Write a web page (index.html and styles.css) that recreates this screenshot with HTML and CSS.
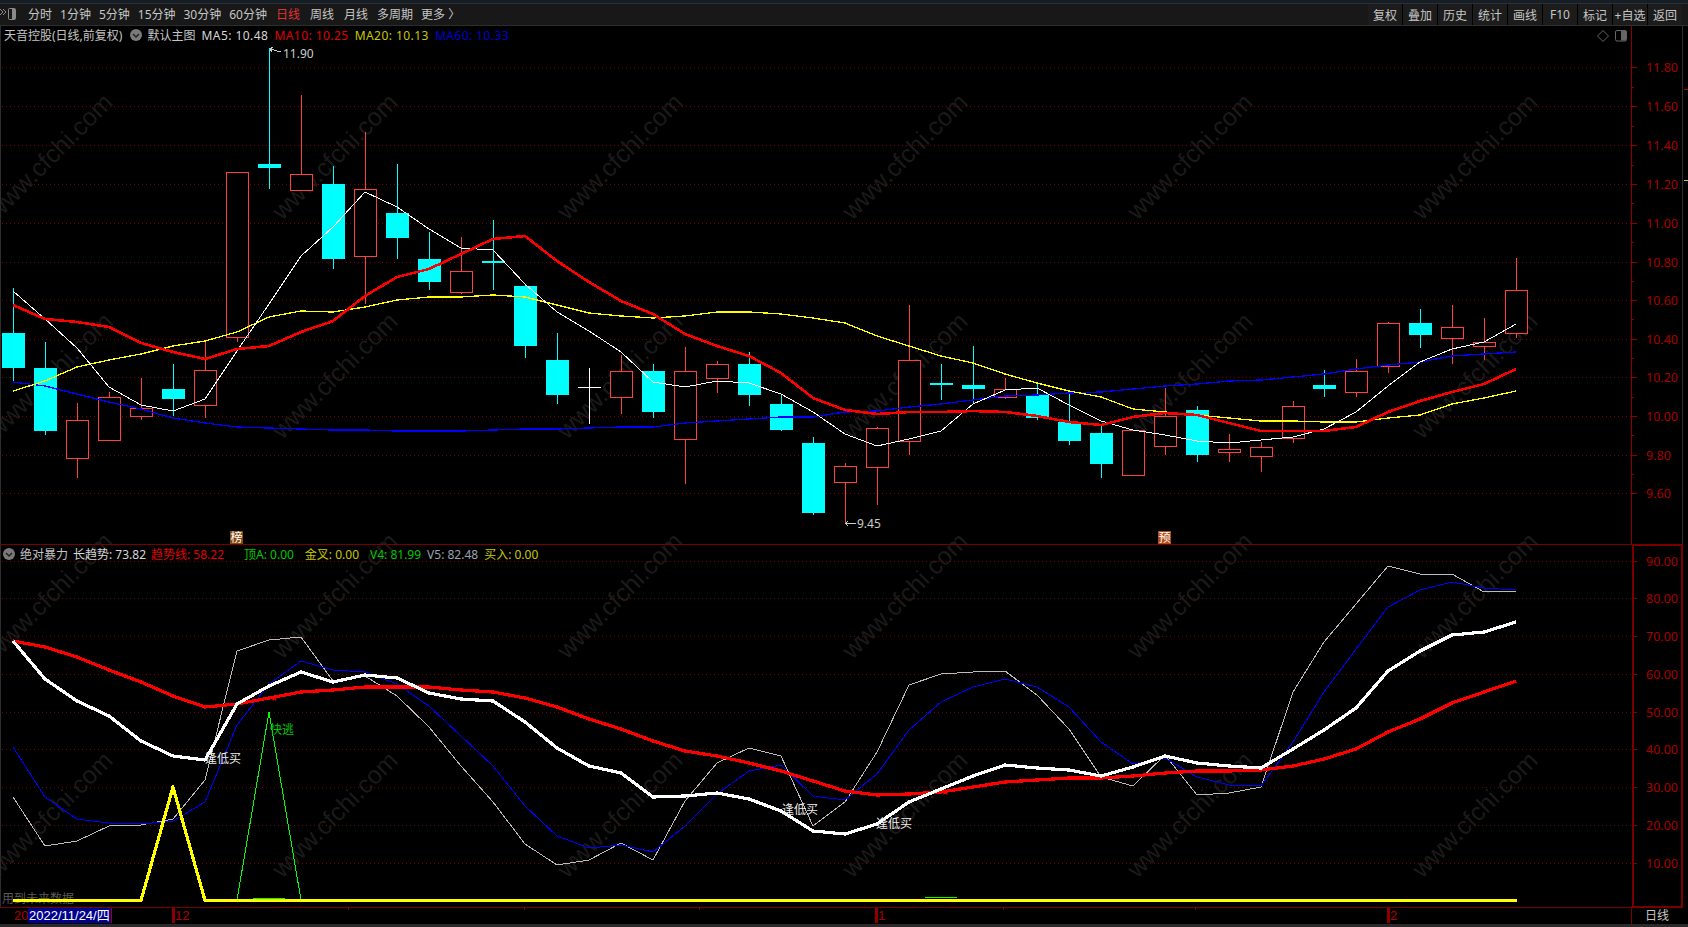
FILE: index.html
```html
<!DOCTYPE html>
<html lang="zh-CN">
<head>
<meta charset="utf-8">
<title>天音控股</title>
<link rel="stylesheet" href="styles.css">
</head>
<body>
<div class="app">
  <div class="watermarks" id="watermarks"></div>
  <div class="topstrip"></div>
  <header class="toolbar">
    <svg class="sidebar-toggle" width="17" height="16" viewBox="0 0 17 16"><path class="ico" d="M0 3l3 3-3 3M3 3l3 3-3 3"/><rect class="ico" x="8.500" y="2.500" width="7" height="11" rx="1"/><rect class="ico-fill" x="12" y="3" width="3" height="10"/></svg>
    <nav class="tabs">
      <span class="tab first">分时</span>
      <span class="tab">1分钟</span>
      <span class="tab">5分钟</span>
      <span class="tab">15分钟</span>
      <span class="tab">30分钟</span>
      <span class="tab">60分钟</span>
      <span class="tab wide active">日线</span>
      <span class="tab wide">周线</span>
      <span class="tab wide">月线</span>
      <span class="tab">多周期</span>
      <span class="tab">更多 〉</span>
    </nav>
    <div class="buttons">
      <span class="btn">复权</span>
      <span class="btn">叠加</span>
      <span class="btn">历史</span>
      <span class="btn">统计</span>
      <span class="btn">画线</span>
      <span class="btn">F10</span>
      <span class="btn">标记</span>
      <span class="btn">+自选</span>
      <span class="btn">返回</span>
    </div>
  </header>

  <section class="panel panel-main">
    <svg class="chart" width="1688" height="518" viewBox="0 27 1688 518">
      <g id="main-grid"></g>
      <g id="candles"></g>
      <g id="main-lines"></g>
      <text class="tag" x="283" y="59">11.90</text>
      <path class="pointer" d="M270 50L281 53M270 50l3-2M270 50l2 3"/>
      <text class="tag" x="857" y="529">9.45</text>
      <path class="pointer" d="M845 524.500H856M845 524.500l3-2M845 524.500l3 2"/>
      <rect class="badge-a" x="230" y="532" width="13" height="13"/>
      <text class="badge-text" x="230.500" y="543">榜</text>
      <rect class="badge-b" x="1158" y="532" width="13" height="13"/>
      <text class="badge-text" x="1158.500" y="543">预</text>
      <rect class="marker-red" x="1684" y="90" width="4" height="1"/>
      <rect class="marker-yellow" x="1684" y="181" width="4" height="1"/>
    </svg>
    <div class="legend">
      <span class="plain">天音控股(日线,前复权)</span>
      <svg class="chev chev-main" width="12" height="12" viewBox="0 0 12 12"><circle class="chev-disc" cx="6" cy="6" r="6"/><path class="chev-mark" d="M3 5l3 3 3-3"/></svg>
      <span class="plain">默认主图</span>
      <span class="c-white stretch">MA5: 10.48</span>
      <span class="c-red stretch">MA10: 10.25</span>
      <span class="c-yellow stretch">MA20: 10.13</span>
      <span class="c-blue stretch">MA60: 10.33</span>
    </div>
    <svg class="panel-tools" width="32" height="14" viewBox="0 0 32 14"><path class="tool" d="M7 1.500L12.500 7 7 12.500 1.500 7z"/><rect class="tool" x="19.500" y="1.500" width="11" height="10.500" rx="1.500"/><rect class="tool-fill" x="25" y="2" width="5" height="9.500"/></svg>
  </section>

  <section class="panel panel-sub">
    <svg class="chart" width="1688" height="362" viewBox="0 546 1688 362">
      <g id="sub-grid"></g>
      <text class="future" x="2" y="904">用到未来数据</text>
      <g id="sub-lines"></g>
      <text class="sig sig-white" x="205" y="764">逢低买</text>
      <text class="sig sig-green" x="270" y="735">快逃</text>
      <text class="sig sig-white" x="782" y="815">逢低买</text>
      <text class="sig sig-white" x="876" y="829">逢低买</text>
      <text class="star" x="270" y="702">★</text>
      <text class="star" x="941" y="796">★</text>
    </svg>
    <div class="legend legend-sub">
      <svg class="chev" width="12" height="12" viewBox="0 0 12 12"><circle class="chev-disc" cx="6" cy="6" r="6"/><path class="chev-mark" d="M3 5l3 3 3-3"/></svg>
      <span class="plain">绝对暴力</span>
      <span class="c-white">长趋势: 73.82</span>
      <span class="c-red">趋势线: 58.22</span>
      <span class="c-green gap-lg">顶A: 0.00</span>
      <span class="c-yellow gap-md">金叉: 0.00</span>
      <span class="c-green gap-md">V4: 81.99</span>
      <span class="c-grey gap-sm">V5: 82.48</span>
      <span class="c-yellow gap-sm">买入: 0.00</span>
    </div>
  </section>

  <footer class="timebar">
    <span class="time-label t-20">20</span>
    <span class="time-cursor">2022/11/24/四</span>
    <span class="time-tick major t-12">12</span>
    <span class="time-tick t-348"></span>
    <span class="time-tick t-524"></span>
    <span class="time-tick t-699"></span>
    <span class="time-tick major t-876">1</span>
    <span class="time-tick t-1003"></span>
    <span class="time-tick t-1195"></span>
    <span class="time-tick major t-1387">2</span>
    <span class="time-unit">日线</span>
  </footer>
  <div class="statusline"></div>
</div>
<script src="chart.js"></script>
</body>
</html>
```

FILE: styles.css
```css
* { box-sizing: border-box; }
html, body { margin: 0; padding: 0; background: #000; }
body { font-family: "Noto Sans", "Noto Sans CJK SC", sans-serif; font-size: 12px; color: #ccc; }

.app { position: relative; width: 1688px; height: 927px; overflow: hidden; display: flex; flex-direction: column; background: #000; }

.watermarks { position: absolute; left: -93px; top: 47px; display: grid; grid-template-columns: repeat(6, 285px); grid-auto-rows: 219.300px; z-index: 0; }
.wm { display: flex; align-items: center; justify-content: center; font-family: "Liberation Sans", sans-serif; font-size: 25px; color: #1a1a1a; white-space: nowrap; }
.wm span { display: block; transform: rotate(-45deg); }

.topstrip { height: 4px; background: #171d24; border-bottom: 1px solid #2b3138; }
.toolbar { position: relative; z-index: 1; height: 22px; display: flex; align-items: stretch; background: #181818; border-bottom: 1px solid #2e2e2e; padding-bottom: 0; }
.sidebar-toggle { margin-top: 2px; flex: none; }
.ico { fill: none; stroke: #8a8a8a; stroke-width: 1; }
.ico-fill { fill: #8a8a8a; }
.tabs { display: flex; align-items: center; margin-left: 7px; }
.tab { padding: 0 4px; line-height: 21px; white-space: nowrap; color: #c6c6c6; }
.tab.wide { padding: 0 5px; }
.tab.active { color: #e53030; }
.buttons { margin-left: auto; margin-right: 6px; display: flex; gap: 1px; background: #000; }
.btn { width: 34px; display: flex; align-items: center; justify-content: center; background: #1c1c1c; color: #c6c6c6; white-space: nowrap; }

.panel { position: relative; z-index: 1; width: 1683px; border-bottom: 1px solid #7a0000; flex: none; }
.panel-main { height: 519px; }
.panel-sub { height: 363px; }
.chart { display: block; overflow: visible; shape-rendering: crispEdges; }

.legend { position: absolute; left: 4px; top: 0; height: 18px; display: flex; align-items: center; gap: 5px; white-space: nowrap; }
.legend-sub { left: 3px; top: 0; }
.gap-lg { margin-left: 15px; }
.gap-md { margin-left: 6px; }
.gap-sm { margin-left: 1px; }
.chev { flex: none; }
.chev-main { margin-left: 3px; }
.chev-disc { fill: #7a7a7a; }
.chev-mark { fill: none; stroke: #222; stroke-width: 1.500; }
.plain { color: #c4c4c4; }
.stretch { letter-spacing: 0.450px; margin-left: 1px; }
.c-white { color: #d6d6d6; }
.c-red { color: #e00000; }
.c-yellow { color: #c8c800; }
.c-blue { color: #0000d0; }
.c-green { color: #00c800; }
.c-grey { color: #9aa2b0; }

.panel-tools { position: absolute; left: 1596px; top: 3px; }
.tool { fill: none; stroke: #666; stroke-width: 1; }
.tool-fill { fill: #666; }

.grid { stroke: #7c0000; stroke-width: 1; stroke-dasharray: 1 3; fill: none; }
.axis { stroke: #8e0000; stroke-width: 1; fill: none; }
.axis-box { stroke: #7a0000; stroke-width: 2; fill: none; }
.edge { stroke: #2e2e2e; stroke-width: 1; }
.axis-label { fill: #a80000; font-size: 12.500px; font-family: "Noto Sans", sans-serif; text-rendering: geometricPrecision; }

.up { fill: #000; stroke: #ff4040; stroke-width: 1; }
.up-wick { fill: #ff4040; }
.down { fill: #00ffff; }
.doji-white { fill: #fff; }

.line { fill: none; stroke-linejoin: round; }
.ma5 { stroke: #fff; stroke-width: 1; }
.ma10 { stroke: #f00; stroke-width: 2.600; }
.ma20 { stroke: #ff0; stroke-width: 1.300; }
.ma60 { stroke: #00f; stroke-width: 1.300; }
.long { stroke: #fff; stroke-width: 3.200; }
.trend { stroke: #f00; stroke-width: 3.200; }
.v4 { stroke: #00f; stroke-width: 1; }
.v5 { stroke: #bbb; stroke-width: 1; }
.buy { stroke: #ff0; stroke-width: 3.200; }
.escape { stroke: #0f0; stroke-width: 1; }

.tag { fill: #ccc; font-size: 12px; }
.pointer { fill: none; stroke: #ccc; stroke-width: 1; }
.badge-a { fill: #86480f; }
.badge-b { fill: #b04a16; }
.badge-text { fill: #fff; font-size: 12px; font-family: "Noto Sans CJK SC", sans-serif; }
.marker-red { fill: #c00000; }
.marker-yellow { fill: #c8c060; }

.future { fill: #5a5a5a; font-size: 12px; font-family: "Noto Sans CJK SC", sans-serif; }
.sig { font-size: 12px; font-family: "Noto Sans CJK SC", sans-serif; }
.sig-white { fill: #eee; }
.sig-green { fill: #00c800; }
.star { fill: #f00; font-size: 9px; font-family: "DejaVu Sans", sans-serif; }

.timebar { position: relative; z-index: 1; height: 16px; flex: none; display: block; }
.time-cursor { position: absolute; left: 28px; top: 0; width: 84px; height: 15px; background: #00008c; color: #fff; border-right: 1px solid #a00000; font-size: 13px; line-height: 15px; font-family: "Liberation Sans", "Noto Sans CJK SC", sans-serif; white-space: nowrap; overflow: hidden; padding-left: 1px; }
.time-label { position: absolute; left: 14px; top: 0; line-height: 15px; color: #b00000; font-size: 13px; font-family: "Liberation Sans", sans-serif; }
.time-tick { position: absolute; top: 0; width: 1px; height: 2px; background: #8e0000; }
.time-tick.major { height: 15px; color: #b00000; font-size: 13px; line-height: 15px; padding-left: 3px; white-space: nowrap; font-family: "Liberation Sans", sans-serif; }
.t-12 { left: 172px; }
.t-348 { left: 348px; }
.t-524 { left: 524px; }
.t-699 { left: 699px; }
.t-876 { left: 875px; }
.t-1003 { left: 1003px; }
.t-1195 { left: 1195px; }
.t-1387 { left: 1387px; }
.time-unit { position: absolute; left: 1645px; top: 0; line-height: 16px; color: #c6c6c6; }
.timebar::before { content: ""; position: absolute; left: 1631px; top: 0; width: 1px; height: 16px; background: #7a0000; }
.statusline { flex: 1; background: #2a2a2a; position: relative; z-index: 1; }
```

FILE: chart.js
```javascript
var NS = "http://www.w3.org/2000/svg";

function el(parent, tag, attrs, text) {
  var node = document.createElementNS(NS, tag);
  for (var key in attrs) node.setAttribute(key, attrs[key]);
  if (text) node.textContent = text;
  parent.appendChild(node);
  return node;
}

function xAt(i) { return Math.round(13.3 + 31.98 * i); }

function polyline(group, cls, ys) {
  var pts = ys.map(function (y, i) { return xAt(i) + "," + y; }).join(" ");
  el(group, "polyline", { "class": "line " + cls, points: pts });
}

/* watermark tiles */
var wm = document.getElementById("watermarks");
for (var n = 0; n < 24; n++) {
  var cell = document.createElement("div");
  cell.className = "wm";
  var label = document.createElement("span");
  label.textContent = "www.cfchi.com";
  cell.appendChild(label);
  wm.appendChild(cell);
}

/* grids and axes */
function axis(group, top, bottom, ys, minors, labels) {
  el(group, "line", { "class": "edge", x1: 0.5, x2: 0.5, y1: top, y2: bottom });
  ys.forEach(function (y, k) {
    el(group, "line", { "class": "grid", x1: 2, x2: 1631, y1: y + 0.5, y2: y + 0.5 });
    el(group, "line", { "class": "axis", x1: 1632, x2: 1637, y1: y + 0.5, y2: y + 0.5 });
    el(group, "text", { "class": "axis-label", x: 1646, y: y + 5 }, labels[k]);
  });
  minors.forEach(function (y) {
    el(group, "line", { "class": "axis", x1: 1632, x2: 1634, y1: y + 0.5, y2: y + 0.5 });
  });
}

var mainGrid = document.getElementById("main-grid");
axis(mainGrid, 27, 545,
  [68, 107, 146, 185, 224, 263, 301, 340, 378, 417, 456, 494],
  [88, 127, 166, 204, 243, 282, 320, 359, 398, 436, 475],
  ["11.80", "11.60", "11.40", "11.20", "11.00", "10.80", "10.60", "10.40", "10.20", "10.00", "9.80", "9.60"]);
el(mainGrid, "line", { "class": "axis", x1: 1631.5, x2: 1631.5, y1: 27, y2: 545 });
el(mainGrid, "line", { "class": "edge", x1: 1682.5, x2: 1682.5, y1: 27, y2: 545 });

var subGrid = document.getElementById("sub-grid");
axis(subGrid, 546, 908,
  [562, 599, 637, 675, 713, 750, 788, 826, 864],
  [581, 618, 656, 694, 732, 769, 807, 845, 883],
  ["90.00", "80.00", "70.00", "60.00", "50.00", "40.00", "30.00", "20.00", "10.00"]);
el(subGrid, "rect", { "class": "axis-box", x: 1633, y: 546, width: 49, height: 362 });

/* candles: type, high, body top, body bottom, low */
var candles = [
  ["c",289,334,369,382],["c",343,369,432,436],["r",404,421,459,479],["r",393,398,441,442],
  ["r",379,409,417,421],["c",365,390,400,417],["r",343,371,406,419],["r",173,173,338,343],
  ["c",49,165,169,190],["r",96,175,191,191],["c",167,185,260,270],["r",133,190,257,305],
  ["c",165,214,239,260],["c",233,260,283,291],["r",238,272,293,295],["c",221,262,264,291],
  ["c",285,287,347,359],["c",334,361,396,405],["w",369,388,389,425],["r",356,372,398,415],
  ["c",365,372,413,419],["r",348,372,440,485],["r",362,365,379,394],["c",353,365,396,407],
  ["c",395,405,431,432],["c",438,444,514,516],["r",464,467,483,525],["r",428,429,468,506],
  ["r",306,361,442,456],["c",365,384,386,401],["c",347,386,390,405],["r",379,390,398,400],
  ["c",383,396,419,421],["c",392,423,442,446],["c",427,434,465,479],["r",431,431,476,477],
  ["r",389,417,447,456],["c",407,411,456,463],["r",435,450,453,463],["r",443,448,457,473],
  ["r",402,407,439,444],["c",371,386,390,398],["r",360,372,393,398],["r",323,324,367,374],
  ["c",310,324,336,349],["r",306,328,339,365],["r",319,343,347,361],["r",259,291,334,339]
];
var candleGroup = document.getElementById("candles");
candles.forEach(function (c, i) {
  var x = xAt(i), type = c[0], hi = c[1], top = c[2], bot = c[3], lo = c[4];
  var wickClass = type === "r" ? "up-wick" : type === "w" ? "doji-white" : "down";
  el(candleGroup, "rect", { "class": wickClass, x: x, y: hi, width: 1, height: lo - hi });
  if (type === "r") {
    el(candleGroup, "rect", { "class": "up", x: x - 10.5, y: top + 0.5, width: 22, height: bot - top });
  } else {
    el(candleGroup, "rect", { "class": wickClass, x: x - 11, y: top, width: 23, height: bot - top });
  }
});

/* main chart moving averages */
var mainLines = document.getElementById("main-lines");
polyline(mainLines, "ma60", [383,387,395,403,410,419,424,428,429,430,431,431,432,432,432,431,430,430,429,428,428,424,422,420,418,418,413,412,408,405,401,397,396,394,393,390,387,385,382,381,378,375,370,366,363,357,355,353]);
polyline(mainLines, "ma20", [392,382,368,361,355,347,342,333,318,312,313,308,301,298,298,296,298,306,314,317,319,317,313,313,315,319,324,337,347,357,364,375,384,392,398,410,413,416,419,422,422,423,423,419,416,405,399,392]);
polyline(mainLines, "ma5", [292,320,349,388,406,412,400,352,305,257,228,193,208,230,249,251,285,313,332,353,383,388,382,384,395,413,435,447,440,432,405,391,389,406,422,431,436,442,444,441,438,430,413,387,363,350,343,325]);
polyline(mainLines, "ma10", [306,320,323,328,344,353,360,350,347,333,322,297,278,270,255,240,237,262,283,302,315,335,347,357,374,399,411,415,413,413,412,413,417,423,426,418,414,416,424,432,432,432,428,413,402,393,385,370]);

/* indicator panel */
var subLines = document.getElementById("sub-lines");
polyline(subLines, "v5", [798,847,842,827,826,820,781,652,641,638,682,677,697,728,767,803,845,866,861,844,861,802,764,749,757,827,803,753,686,675,673,672,696,730,778,787,756,796,794,788,693,643,605,567,575,575,593,592]);
polyline(subLines, "v4", [748,798,820,824,825,822,803,726,685,662,671,673,685,707,737,767,807,837,849,846,853,827,795,772,766,797,801,775,731,703,688,680,688,708,743,765,759,778,786,787,743,693,650,608,591,583,589,591]);
el(subLines, "polyline", { "class": "line escape", points: xAt(7) + ",901 " + xAt(8) + ",713 " + xAt(9) + ",901" });
el(subLines, "polyline", { "class": "line escape", points: "253,899 285,899" });
el(subLines, "polyline", { "class": "line escape", points: "925,899 941,898 957,899" });
polyline(subLines, "trend", [642,648,658,671,683,697,708,705,699,693,691,688,688,688,691,693,699,708,720,730,742,752,757,764,772,782,792,796,795,793,788,783,781,779,779,777,774,772,772,771,767,760,750,733,720,704,693,682]);
polyline(subLines, "long", [642,680,702,717,742,757,761,705,687,673,683,676,679,694,700,702,723,749,767,774,798,797,794,800,812,832,835,825,803,790,777,766,769,771,777,768,757,764,767,769,750,731,709,672,652,636,633,623]);
el(subLines, "polyline", { "class": "line buy", points: "13,901.5 " + xAt(4) + ",901.5 " + xAt(5) + ",788 " + xAt(6) + ",901.5 1517,901.5" });
```
